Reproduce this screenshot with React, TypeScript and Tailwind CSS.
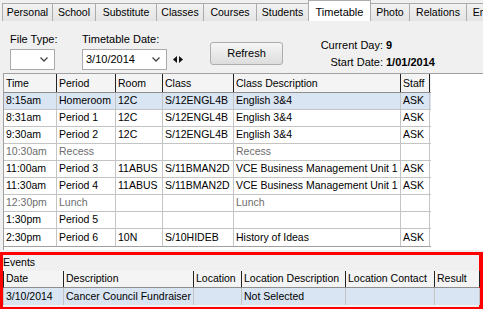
import React from 'react';

const font = { fontFamily: '"Liberation Sans", Arial, sans-serif' };

const tabs = [
  { label: 'Personal', w: 'w-[51px]' },
  { label: 'School', w: 'w-[44px]' },
  { label: 'Substitute', w: 'w-[62px]' },
  { label: 'Classes', w: 'w-[48px]' },
  { label: 'Courses', w: 'w-[54px]' },
  { label: 'Students', w: 'w-[53px]' },
  { label: 'Timetable', w: 'w-[63px]', active: true },
  { label: 'Photo', w: 'w-[40px]' },
  { label: 'Relations', w: 'w-[58px]' },
  { label: 'Email', w: 'w-[40px]' },
];

type Row = { time: string; period: string; room: string; cls: string; desc: string; staff: string; muted?: boolean; selected?: boolean };

const rows: Row[] = [
  { time: '8:15am', period: 'Homeroom', room: '12C', cls: 'S/12ENGL4B', desc: 'English 3&4', staff: 'ASK', selected: true },
  { time: '8:31am', period: 'Period 1', room: '12C', cls: 'S/12ENGL4B', desc: 'English 3&4', staff: 'ASK' },
  { time: '9:30am', period: 'Period 2', room: '12C', cls: 'S/12ENGL4B', desc: 'English 3&4', staff: 'ASK' },
  { time: '10:30am', period: 'Recess', room: '', cls: '', desc: 'Recess', staff: '', muted: true },
  { time: '11:00am', period: 'Period 3', room: '11ABUS', cls: 'S/11BMAN2D', desc: 'VCE Business Management Unit 1', staff: 'ASK' },
  { time: '11:30am', period: 'Period 4', room: '11ABUS', cls: 'S/11BMAN2D', desc: 'VCE Business Management Unit 1', staff: 'ASK' },
  { time: '12:30pm', period: 'Lunch', room: '', cls: '', desc: 'Lunch', staff: '', muted: true },
  { time: '1:30pm', period: 'Period 5', room: '', cls: '', desc: '', staff: '' },
  { time: '2:30pm', period: 'Period 6', room: '10N', cls: 'S/10HIDEB', desc: 'History of Ideas', staff: 'ASK' },
];

const ttHeaders = ['Time', 'Period', 'Room', 'Class', 'Class Description', 'Staff'];
const evHeaders = ['Date', 'Description', 'Location', 'Location Description', 'Location Contact', 'Result'];

function Chevron() {
  return (
    <svg width="8" height="5" viewBox="0 0 8 5" className="shrink-0">
      <path d="M0.5 0.5 L4 4 L7.5 0.5" fill="none" stroke="#444" strokeWidth="1.3" />
    </svg>
  );
}

function Select({ value, className }: { value: string; className: string }) {
  return (
    <div className={`h-[21px] bg-white border border-[#a9a9a9] flex items-center justify-between pl-[3px] pr-[6px] text-[11px] ${className}`}>
      <span>{value}</span>
      <Chevron />
    </div>
  );
}

export default function App() {
  return (
    <div className="w-[483px] h-[309px] bg-[#f0f0f0] overflow-hidden text-[10.5px] text-black" style={font}>
      {/* Tabs */}
      <div className="h-[21px] flex items-end pl-[3px] overflow-hidden">
        {tabs.map((t) =>
          t.active ? (
            <div
              key={t.label}
              className={`${t.w} shrink-0 h-[21px] -ml-px bg-white border border-b-0 border-[#acacac] flex justify-center pt-[3px] text-[11px]`}
            >
              {t.label}
            </div>
          ) : (
            <div
              key={t.label}
              className={`${t.w} shrink-0 h-[18px] -ml-px bg-gradient-to-b from-[#f2f2f2] to-[#e4e4e4] border border-b-0 border-[#acacac] flex items-center justify-center whitespace-nowrap`}
            >
              {t.label}
            </div>
          )
        )}
      </div>

      {/* Toolbar */}
      <div className="h-[52px] flex items-start pt-[12px] text-[11px]">
        <div className="ml-[10px] w-[45px] flex flex-col">
          <div className="h-[16px] leading-[13px] whitespace-nowrap">File Type:</div>
          <Select value="" className="w-[45px]" />
        </div>
        <div className="ml-[27px] w-[85px] flex flex-col">
          <div className="h-[16px] leading-[13px] whitespace-nowrap">Timetable Date:</div>
          <Select value="3/10/2014" className="w-[85px]" />
        </div>
        <div className="ml-[6px] mt-[16px] h-[21px] flex items-center gap-[2px]">
          <svg width="4" height="7" viewBox="0 0 4 7"><path d="M4 0 L0 3.5 L4 7 Z" fill="#111" /></svg>
          <svg width="4" height="7" viewBox="0 0 4 7"><path d="M0 0 L4 3.5 L0 7 Z" fill="#111" /></svg>
        </div>
        <button className="ml-[27px] mt-[9px] w-[73px] h-[23px] rounded-[3px] border border-[#adadad] bg-gradient-to-b from-[#f6f6f6] to-[#dddddd]">
          Refresh
        </button>
        <div className="ml-[34px] mt-[4px] grid grid-cols-[66px_auto] gap-x-[3px] leading-[17px]">
          <span className="text-right">Current Day:</span>
          <span className="font-bold">9</span>
          <span className="text-right">Start Date:</span>
          <span className="font-bold">1/01/2014</span>
        </div>
      </div>

      {/* Timetable grid */}
      <div className="h-[177px] bg-white border-t border-[#a0a0a0] ml-[3px] border-l flex flex-col">
        <div className="w-[427px] border-b border-[#a0a0a0]">
          <div className="grid grid-cols-[53px_59px_47px_71px_167px_29px] h-[19px] bg-[#f4f4f4] border-b border-[#8e8e8e]">
            {ttHeaders.map((h) => (
              <div key={h} className="border-r border-[#222] pl-[2px] flex items-center leading-none">
                {h}
              </div>
            ))}
          </div>
          {rows.map((r, i) => (
            <div
              key={i}
              className={`grid grid-cols-[53px_59px_47px_71px_167px_29px] h-[17px] ${r.selected ? 'bg-[#d9e5f3]' : ''} ${r.muted ? 'text-[#6d6d6d]' : ''} ${i < rows.length - 1 ? 'border-b border-[#c4c4c4]' : ''}`}
            >
              {[r.time, r.period, r.room, r.cls, r.desc, r.staff].map((c, j) => (
                <div key={j} className="border-r border-[#c4c4c4] pl-[2px] flex items-center whitespace-nowrap overflow-hidden">
                  {c}
                </div>
              ))}
            </div>
          ))}
        </div>
      </div>

      {/* Events */}
      <div className="mt-[2px] h-[58px] border-l-[3px] border-t-[3px] border-b-[3px] border-r-[4px] border-[#ff0000] flex flex-col">
        <div className="h-[16px] flex items-end">Events</div>
        <div className="grid grid-cols-[60px_130px_48px_104px_89px_45px] h-[17px] bg-[#f4f4f4] border-l border-[#222] border-b border-b-[#8e8e8e]">
          {evHeaders.map((h) => (
            <div key={h} className="border-r border-[#222] pl-[2px] flex items-center whitespace-nowrap overflow-hidden">
              {h}
            </div>
          ))}
        </div>
        <div className="grid grid-cols-[60px_130px_48px_104px_89px_45px] h-[17px] bg-[#d9e5f3] border-l border-[#c4c4c4]">
          {['3/10/2014', 'Cancer Council Fundraiser', '', 'Not Selected', '', ''].map((c, j) => (
            <div key={j} className="border-r border-[#c4c4c4] pl-[2px] flex items-center whitespace-nowrap overflow-hidden">
              {c}
            </div>
          ))}
        </div>
      </div>
    </div>
  );
}
